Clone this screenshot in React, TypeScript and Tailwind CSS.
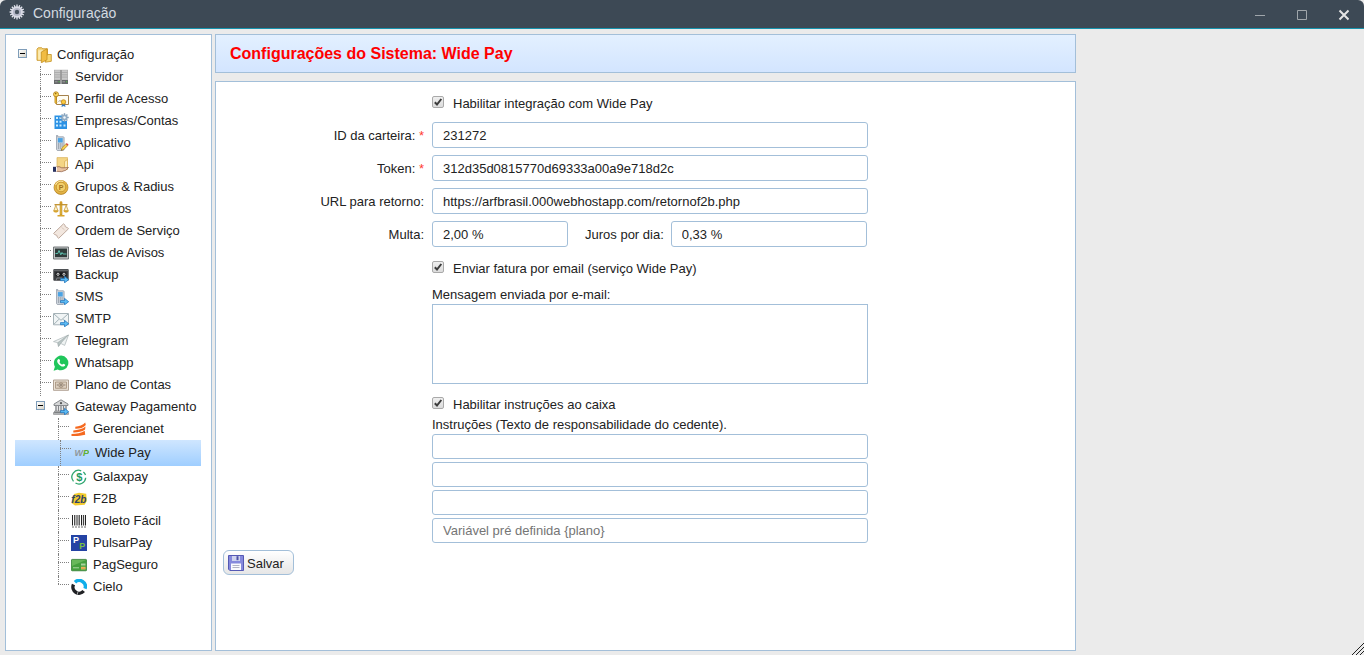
import React, { useState } from 'react';

const Svg = ({ children }: { children: React.ReactNode }) => (
  <svg viewBox="0 0 16 16" className="block size-4 shrink-0" aria-hidden="true">
    {children}
  </svg>
);

const BlueArrow = () => (
  <path d="M7.5 11.6h4V9.3l4.2 3.4-4.2 3.2v-2.2h-4z" fill="#5cbcf4" stroke="#1d6fb8" strokeWidth=".7" />
);

const GearIcon = () => (
  <Svg>
    <g stroke="#e3e5ee" strokeWidth="1.3">
      <path d="M8 .6v14.8M.6 8h14.8M2.8 2.8l10.4 10.4M13.2 2.8L2.8 13.2M5.2 1.2l5.6 13.6M10.8 1.2L5.2 14.8M1.2 5.2l13.6 5.6M1.2 10.8l13.6-5.6" />
    </g>
    <circle cx="8" cy="8" r="5.8" fill="#d9dbe6" />
    <circle cx="8" cy="8" r="4" fill="#b4b7c8" />
    <circle cx="8" cy="8" r="2.2" fill="#44505c" />
  </Svg>
);

const FolderIcon = () => (
  <Svg>
    <path d="M1 2.2L2.2.8h3.6l1 1h4.7v11.5H1z" fill="#f6d67c" stroke="#c9962a" strokeWidth=".9" />
    <path d="M2.2 3.2h5v9.5h-5z" fill="#fcebb4" />
    <path d="M10.5 8.5l1.5-1h3.3v6.8l-6 .9z" fill="#f7d671" stroke="#c48f20" strokeWidth=".8" />
    <path d="M5.3 5L11 1.8v11l-5.7 3z" fill="#f1bc42" stroke="#c48f20" strokeWidth=".8" />
  </Svg>
);

const ServerIcon = () => (
  <Svg>
    <path d="M1 .8h14V11H1z" fill="#a5a5a5" />
    <path d="M1.5 1.3h5.7v9.4H1.5zM8.8 1.3h5.7v9.4H8.8z" fill="#c9c9c9" />
    <path d="M1.5 3.5h13M1.5 5.8h13M1.5 8.1h13" stroke="#a2a2a2" strokeWidth=".7" />
    <path d="M8 1v14" stroke="#8a8a8a" strokeWidth=".8" />
    <path d="M1 11h6.5v4H1zM8.5 11H15v4H8.5z" fill="#66686a" />
    <path d="M2 12.8h2.5M9.5 12.8H12" stroke="#a8abaa" strokeWidth=".8" />
    <path d="M5.5 12.3h1.1v1H5.5zM13 12.3h1.1v1H13z" fill="#57c64b" />
  </Svg>
);

const ProfileIcon = () => (
  <Svg>
    <path d="M3.5 4.5h12v9h-12z" fill="#fffdf3" stroke="#a6824c" />
    <path d="M5.5 10.5l1.5-1 1.2 1 1.3-1" fill="none" stroke="#777" strokeWidth=".7" />
    <path d="M1.9 5.5v6.3l1.1 1 1-1-.7-.9.7-.9-.6-.8V5.5z" fill="#f3c23b" stroke="#af7a13" strokeWidth=".6" />
    <circle cx="3" cy="3.3" r="2.5" fill="#f9d55c" stroke="#b07c16" strokeWidth=".8" />
    <circle cx="2.7" cy="2.6" r=".8" fill="#8f6310" />
    <path d="M9.3 12l-.8 4 2-1 2 1-.8-4z" fill="#3378c4" />
    <circle cx="10.5" cy="11" r="2.3" fill="#f8c93f" stroke="#b97a10" strokeWidth=".7" />
  </Svg>
);

const CompanyIcon = () => (
  <Svg>
    <path d="M1.5 2.5h8V16h-8zM9 8h5v8H9z" fill="#2b91e4" />
    <path d="M3 4h2v2H3zM6.5 4h2v2h-2zM3 7.7h2v2H3zM6.5 7.7h2v2h-2zM3 11.4h2v2H3zM6.5 11.4h2v2h-2zM10.5 11.4h2v2h-2z" fill="#c9ecff" />
    <g stroke="#7f9ab5" strokeWidth="1.4">
      <path d="M11.5.3v8.4M7.3 4.5h8.4M8.6 1.6l5.8 5.8M14.4 1.6L8.6 7.4" />
    </g>
    <circle cx="11.5" cy="4.5" r="3" fill="#93adc5" />
    <circle cx="11.5" cy="4.5" r="1.2" fill="#f4f8fb" />
  </Svg>
);

const Phone = () => (
  <>
    <path d="M3.5.3h1.2v1.5h5.8l.6.8v11.9l-.8 1H4.3l-.8-1z" fill="#cdd4dc" stroke="#8a94a0" strokeWidth=".7" />
    <path d="M4.9 3.1h4.8v4.4H4.9z" fill="#4aa3e4" />
    <path d="M5 9h1M6.8 9h1M8.6 9h1M5 11h1M6.8 11h1M8.6 11h1M5 13h1M6.8 13h1" stroke="#6a7480" strokeWidth=".9" />
  </>
);

const AppIcon = () => (
  <Svg>
    <Phone />
    <path d="M8.2 15.4l.8-2.7 3.8-3.7 1.8 1.7-3.8 3.8z" fill="#f5ce51" stroke="#a17317" strokeWidth=".6" />
    <path d="M12.8 9l1-.9 1.8 1.7-1 .9z" fill="#d6453c" />
    <path d="M8.2 15.4l.3-1 .7.7z" fill="#333" />
  </Svg>
);

const ApiIcon = () => (
  <Svg>
    <path d="M4 .6h10.5v10.5H4z" fill="#f4d584" stroke="#d9b057" strokeWidth=".7" />
    <path d="M11.5 4.5l3-2v10l-3 .5z" fill="#fbebbb" stroke="#d0a13f" strokeWidth=".6" />
    <path d="M3 10.2l3-.6 2.7 1.2H11l4.5-.3-2.7 2.7-4.2 1.5L3 14.3z" fill="#e9c3a2" stroke="#8a5c45" strokeWidth=".7" />
    <path d="M0 9.8h3v5H0z" fill="#27305f" />
    <path d="M3 10h.9v4.6H3z" fill="#fff" />
  </Svg>
);

const CoinIcon = () => (
  <Svg>
    <circle cx="8" cy="8.5" r="7" fill="#cf9a2c" stroke="#a87413" strokeWidth=".6" />
    <circle cx="8" cy="8" r="6.7" fill="#e4b548" />
    <circle cx="8" cy="8" r="4.8" fill="#f2cf6b" stroke="#b98721" strokeWidth=".7" />
    <text x="8" y="10.5" textAnchor="middle" fontSize="7" fontWeight="bold" fill="#a3741c">P</text>
    <path d="M2.6 6a5.8 5.8 0 017.5-3.5" fill="none" stroke="#fff1bc" strokeWidth=".8" />
  </Svg>
);

const ScaleIcon = () => (
  <Svg>
    <path d="M7 2h2v12H7z" fill="#e8b93e" stroke="#a67a1d" strokeWidth=".5" />
    <circle cx="8" cy="1.7" r="1.4" fill="#d39c28" />
    <path d="M1.5 3.7h13" fill="none" stroke="#c0902a" strokeWidth="1.3" />
    <path d="M2.8 4.2L.8 9.7H5zM13.2 4.2L11 9.7h4.2z" fill="#fff3c9" stroke="#be8f2d" strokeWidth=".7" />
    <path d="M.2 9.4h5.4c-.3 2.8-5.1 2.8-5.4 0zM10.4 9.4h5.4c-.3 2.8-5.1 2.8-5.4 0zM4.5 14h7v1.6h-7z" fill="#d8a42d" />
  </Svg>
);

const TicketIcon = () => (
  <Svg>
    <path d="M.6 10.4L10.5.8l1.7 1.6c-.3 1.4.8 2.2 1.8 1.8l1.5 1.6-9.8 9.5-1.6-1.5c.2-1.2-.7-2.2-2-1.9z" fill="#f2e7df" stroke="#b8a294" strokeWidth=".9" />
    <path d="M8.2 3.7l4.3 4.4" stroke="#c2aa9a" strokeWidth=".9" strokeDasharray="1 1" />
  </Svg>
);

const MonitorIcon = () => (
  <Svg>
    <path d="M.5 2h15v12H.5z" fill="#c5c8c9" stroke="#686c6e" strokeWidth=".9" />
    <path d="M2 3.5h12v8.7H2z" fill="#2f3b3a" />
    <path d="M2.5 8.5h2.3L6 5.5l1.8 4.3L9 7.5l1 1.5h3.5" fill="none" stroke="#63d0bd" strokeWidth=".9" />
  </Svg>
);

const TapeIcon = () => (
  <Svg>
    <rect x=".3" y="2" width="15.4" height="11.7" rx="1" fill="#3c3e41" />
    <path d="M1 2.6h14v1.2H1z" fill="#6b6f72" />
    <path d="M2.5 5.3h11v4h-11z" fill="#17181a" />
    <circle cx="5" cy="7.3" r="1.1" fill="none" stroke="#eee" strokeWidth=".9" />
    <circle cx="11" cy="7.3" r="1.1" fill="none" stroke="#eee" strokeWidth=".9" />
    <path d="M3 13.5L4 11h5" fill="none" stroke="#8a8d90" strokeWidth=".8" />
    <BlueArrow />
  </Svg>
);

const SmsIcon = () => (
  <Svg>
    <Phone />
    <BlueArrow />
  </Svg>
);

const MailIcon = () => (
  <Svg>
    <path d="M.5 2.5h15v11.3H.5z" fill="#f0f4f5" stroke="#a6b3b8" />
    <path d="M1 3l7 6.3L15 3M1 13.2l5-5M15 13.2l-5-5" fill="none" stroke="#98a8ae" strokeWidth=".9" />
    <BlueArrow />
  </Svg>
);

const PlaneIcon = () => (
  <Svg>
    <path d="M.5 8.6L15.5 2l-3.8 10.4-4-2-2.2 3-.8-3.7z" fill="#eef2f2" stroke="#aab5b6" strokeWidth=".7" />
    <path d="M4.9 9.5L15.3 2l-7.7 8.4-2.1 3z" fill="#b8c4c4" stroke="#98a4a5" strokeWidth=".5" />
  </Svg>
);

const WhatsappIcon = () => (
  <Svg>
    <path d="M8.2.6a7.3 7.3 0 11-3.5 13.8L.6 15.7l1.3-4A7.4 7.4 0 018.2.6z" fill="#20c65b" />
    <path d="M5.2 4.2c.7-.4 1.2-.2 1.5.6l.4 1c.2.5-.6 1-.6 1.4.6 1.2 1.5 1.9 2.6 2.4.5 0 .8-1 1.3-.9l1.6.8c.5.3.1 1.2-.4 1.6-1.5 1.1-3.7.2-5.2-1.1-1.5-1.4-2.6-3.1-2.1-4.7.2-.5.5-.9.9-1.1z" fill="#fff" />
  </Svg>
);

const CashIcon = () => (
  <Svg>
    <path d="M.5 3h15v10.3H.5z" fill="#ece3d7" stroke="#a9998a" strokeWidth=".9" />
    <path d="M2.5 5h11v6.3h-11z" fill="#ddd0c0" stroke="#a28e78" strokeWidth=".8" />
    <circle cx="8" cy="8.1" r="2.3" fill="#cbbba8" stroke="#897866" strokeWidth=".7" />
    <path d="M7.5 7h1v2h-1zM3.8 7.6h1v1h-1zM11.3 7.6h1v1h-1z" fill="#6e6257" />
  </Svg>
);

const BankIcon = () => (
  <Svg>
    <path d="M1 5L8 .8 15 5v1.5H1z" fill="#d5d6d7" stroke="#707477" strokeWidth=".8" />
    <circle cx="8" cy="4.2" r="1.1" fill="#555" />
    <path d="M3 7v5.5M5.5 7v5.5M8 7v5.5M10.5 7v5.5M13 7v5.5" stroke="#84878a" strokeWidth="1.4" />
    <path d="M1.5 12h13v1.5h-13zM.5 13.5h15v1.9H.5z" fill="#b3b5b7" stroke="#6c6f71" strokeWidth=".5" />
    <BlueArrow />
  </Svg>
);

const GerencianetIcon = () => (
  <Svg>
    <path d="M4.3 5.8C8 5.3 12 4.3 14.2 1.6l.6 2.4C12.5 6.9 8.5 7.9 4.3 7.8zM2.3 9.4c4.5-.4 9.2-1.3 12.2-4l-.4 3.2c-3 2.4-8 3-11.8 2.9zM.5 13c4.7-.3 9.8-.9 13.2-3.3l.5 4C9.5 15 4.5 15.2.5 14.9z" fill="#f5691f" />
  </Svg>
);

const WidePayIcon = () => (
  <Svg>
    <text x="1.5" y="11" fontSize="9" fontWeight="bold" fontStyle="italic" fill="#8f979b">
      W<tspan fill="#5fae34">P</tspan>
    </text>
  </Svg>
);

const GalaxpayIcon = () => (
  <Svg>
    <path d="M10.2 1.8a6.7 6.7 0 00-7.7 10.5M4.5 14a6.7 6.7 0 0010.2-5.2M12.4 3a6.7 6.7 0 012.1 3" fill="none" stroke="#2fa66f" strokeWidth="1.3" />
    <text x="8.2" y="12.2" textAnchor="middle" fontSize="11" fontWeight="bold" fill="#1f9a60">$</text>
  </Svg>
);

const F2bIcon = () => (
  <Svg>
    <path d="M3 3l5-1.2 7.2.9.6 7.3-2.2 3.8L4 14.5.5 12z" fill="#f3ca2c" />
    <text x="7.8" y="12.2" textAnchor="middle" fontSize="10" fontWeight="bold" fontStyle="italic" fill="#2f4468">f2b</text>
  </Svg>
);

const BarcodeIcon = () => (
  <Svg>
    <path d="M1.5 2v10.5M14.5 2v10.5M6 2v10.5M10.5 2v10.5" stroke="#222" />
    <path d="M3.7 2v10.5M8.2 2v10.5M12.5 2v10.5" stroke="#444" strokeWidth="1.3" />
    <path d="M1 14h14" stroke="#666" strokeDasharray="2 1" />
  </Svg>
);

const PulsarIcon = () => (
  <Svg>
    <path d="M0 0h16v16H0z" fill="#2443a4" />
    <text x="2" y="8" fontSize="9" fontWeight="bold" fill="#fff">P</text>
    <text x="8.3" y="14" fontSize="9" fontWeight="bold" fill="#7bc143">P</text>
  </Svg>
);

const CardIcon = () => (
  <Svg>
    <rect x=".4" y="2.4" width="15.2" height="11.4" rx=".8" fill="#45a03e" stroke="#26742a" strokeWidth=".7" />
    <path d="M1 3h14L1 9z" fill="#68b85a" />
    <path d="M2 10.8h6" stroke="#c7e7bd" strokeWidth=".8" />
    <path d="M10 6.5h4.5v2H10z" fill="#a9d39d" />
    <path d="M10 9.8h4.5v2.6H10z" fill="#f2cf64" />
    <path d="M10 10.7h4.5v.8H10z" fill="#cc7a3c" />
  </Svg>
);

const CieloIcon = () => (
  <Svg>
    <path d="M4 3.2A6.1 6.1 0 0114 9.6" fill="none" stroke="#10aeea" strokeWidth="3.4" />
    <path d="M12.7 12A6.1 6.1 0 012.5 5.5" fill="none" stroke="#202225" strokeWidth="3.4" />
    <path d="M7 12.5l-.8 3.2" stroke="#fff" strokeWidth=".6" />
  </Svg>
);

const DiskIcon = () => (
  <Svg>
    <path d="M.5.5h15v15H1.8L.5 14.2z" fill="#8589dc" stroke="#5458b4" />
    <path d="M4 1h8v5H4z" fill="#cfd3ee" />
    <path d="M8.5 1.2h2v4h-2z" fill="#4c51a8" />
    <path d="M3 8.5h10V15H3z" fill="#fafafe" />
    <path d="M4.5 10.5h7M4.5 12.5h7" stroke="#9ea1b5" strokeWidth=".8" />
  </Svg>
);

type Leaf = { label: string; Icon: React.FC };

const systemItems: Leaf[] = [
  { label: 'Servidor', Icon: ServerIcon },
  { label: 'Perfil de Acesso', Icon: ProfileIcon },
  { label: 'Empresas/Contas', Icon: CompanyIcon },
  { label: 'Aplicativo', Icon: AppIcon },
  { label: 'Api', Icon: ApiIcon },
  { label: 'Grupos & Radius', Icon: CoinIcon },
  { label: 'Contratos', Icon: ScaleIcon },
  { label: 'Ordem de Serviço', Icon: TicketIcon },
  { label: 'Telas de Avisos', Icon: MonitorIcon },
  { label: 'Backup', Icon: TapeIcon },
  { label: 'SMS', Icon: SmsIcon },
  { label: 'SMTP', Icon: MailIcon },
  { label: 'Telegram', Icon: PlaneIcon },
  { label: 'Whatsapp', Icon: WhatsappIcon },
  { label: 'Plano de Contas', Icon: CashIcon },
];

const gatewayItems: Leaf[] = [
  { label: 'Gerencianet', Icon: GerencianetIcon },
  { label: 'Wide Pay', Icon: WidePayIcon },
  { label: 'Galaxpay', Icon: GalaxpayIcon },
  { label: 'F2B', Icon: F2bIcon },
  { label: 'Boleto Fácil', Icon: BarcodeIcon },
  { label: 'PulsarPay', Icon: PulsarIcon },
  { label: 'PagSeguro', Icon: CardIcon },
  { label: 'Cielo', Icon: CieloIcon },
];

const Toggle = ({ label, open, onClick }: { label: string; open: boolean; onClick: () => void }) => (
  <button
    type="button"
    aria-label={label}
    aria-expanded={open}
    onClick={onClick}
    className="mb-1 grid size-[9px] shrink-0 place-items-center border border-[#7f9db9] bg-linear-to-br from-white to-[#d8d4c8]"
  >
    <svg viewBox="0 0 5 5" className="block size-[5px]" aria-hidden="true">
      <path d={open ? 'M0 2h5v1H0z' : 'M0 2h5v1H0zM2 0h1v5H2z'} fill="#000" />
    </svg>
  </button>
);

const Connector = ({ last }: { last?: boolean }) => (
  <span className="flex h-full w-[11px] shrink-0 flex-col" aria-hidden="true">
    <span className="h-2 border-l border-dotted border-[#808080]" />
    <span className={last ? 'flex-1 border-t border-dotted border-[#808080]' : 'flex-1 border-t border-l border-dotted border-[#808080]'} />
  </span>
);

const TreeLeaf = ({ item, level, last, selected, onSelect }: {
  item: Leaf;
  level: 1 | 2;
  last?: boolean;
  selected: boolean;
  onSelect: () => void;
}) => {
  const indent = level === 1 ? 'pl-[25px]' : selected ? 'pl-[45px]' : 'pl-[43px]';
  const look = selected ? 'h-[26px] bg-linear-to-b from-[#cfe6ff] to-[#9fceff]' : 'h-[22px]';
  return (
    <li>
      <a
        href="#"
        onClick={(e) => {
          e.preventDefault();
          onSelect();
        }}
        className={`flex items-center ${indent} ${look}`}
      >
        <Connector last={last} />
        <span className="ml-0.5">
          <item.Icon />
        </span>
        <span className="ml-1.5 whitespace-nowrap">{item.label}</span>
      </a>
    </li>
  );
};

const Sidebar = () => {
  const [active, setActive] = useState('Wide Pay');
  const [rootOpen, setRootOpen] = useState(true);
  const [gatewayOpen, setGatewayOpen] = useState(true);
  return (
    <nav aria-label="Configuração" className="w-[207px] shrink-0 border border-[#a3bfd9] bg-white pt-[9px] pr-2.5 pl-[9px]">
      <div className="flex h-[22px] items-center pl-[3px]">
        <Toggle label="Alternar Configuração" open={rootOpen} onClick={() => setRootOpen(!rootOpen)} />
        <span className="ml-[9px]">
          <FolderIcon />
        </span>
        <span className="ml-[5px]">Configuração</span>
      </div>
      {rootOpen && (
        <ul>
          {systemItems.map((item) => (
            <TreeLeaf key={item.label} item={item} level={1} selected={active === item.label} onSelect={() => setActive(item.label)} />
          ))}
          <li>
            <div className="flex h-[22px] items-center pl-[21px]">
              <Toggle label="Alternar Gateway Pagamento" open={gatewayOpen} onClick={() => setGatewayOpen(!gatewayOpen)} />
              <span className="ml-2">
                <BankIcon />
              </span>
              <span className="ml-1.5 whitespace-nowrap">Gateway Pagamento</span>
            </div>
            {gatewayOpen && (
              <ul>
                {gatewayItems.map((item, i) => (
                  <TreeLeaf
                    key={item.label}
                    item={item}
                    level={2}
                    last={i === gatewayItems.length - 1}
                    selected={active === item.label}
                    onSelect={() => setActive(item.label)}
                  />
                ))}
              </ul>
            )}
          </li>
        </ul>
      )}
    </nav>
  );
};

const Check = ({ id, label }: { id: string; label: string }) => (
  <div className="col-start-2 flex h-4 items-center gap-[9px]">
    <span className="mb-0.5 grid size-3 shrink-0">
      <input
        id={id}
        type="checkbox"
        defaultChecked
        className="peer col-start-1 row-start-1 size-3 appearance-none rounded-xs border border-[#a9a9a9] bg-linear-to-b from-[#efefef] to-[#dcdcdc]"
      />
      <svg viewBox="0 0 12 12" className="pointer-events-none invisible col-start-1 row-start-1 size-3 peer-checked:visible" aria-hidden="true">
        <path d="M2.8 6.2L5 8.5 9.3 3" fill="none" stroke="#3c3c3c" strokeWidth="2" />
      </svg>
    </span>
    <label htmlFor={id} className="pt-0.5">{label}</label>
  </div>
);

const FieldLabel = ({ id, text, required }: { id: string; text: string; required?: boolean }) => (
  <label htmlFor={id} className="block pt-0.5 text-right whitespace-nowrap">
    {text}
    {required && <span className="text-[#ff3b30]"> *</span>}
  </label>
);

const fieldClass = 'w-full min-w-0 rounded-[3px] border border-[#a3bfd9] bg-white px-2.5 outline-none placeholder:text-[#757575]';

const instructions = [
  { id: 'inst1' },
  { id: 'inst2' },
  { id: 'inst3' },
  { id: 'inst4', placeholder: 'Variável pré definida {plano}' },
];

const WidePayForm = () => (
  <form
    onSubmit={(e) => e.preventDefault()}
    className="flex-1 border border-[#a3bfd9] bg-white pt-[13px] pb-4"
  >
    <div className="grid grid-cols-[208px_minmax(0,436px)] items-center gap-x-2">
      <Check id="enable" label="Habilitar integração com Wide Pay" />
    </div>
    <div className="mt-[11px] grid grid-cols-[208px_minmax(0,436px)] items-center gap-x-2 gap-y-[7px]">
      <FieldLabel id="wallet" text="ID da carteira:" required />
      <input id="wallet" type="text" defaultValue="231272" className={`h-[26px] ${fieldClass}`} />
      <FieldLabel id="token" text="Token:" required />
      <input id="token" type="text" defaultValue="312d35d0815770d69333a00a9e718d2c" className={`h-[26px] ${fieldClass}`} />
      <FieldLabel id="url" text="URL para retorno:" />
      <input id="url" type="text" defaultValue="https://arfbrasil.000webhostapp.com/retornof2b.php" className={`h-[26px] ${fieldClass}`} />
      <FieldLabel id="fine" text="Multa:" />
      <div className="flex items-center pr-px">
        <div className="w-[136px]">
          <input id="fine" type="text" defaultValue="2,00 %" className={`block h-[26px] ${fieldClass}`} />
        </div>
        <div className="ml-[17px]">
          <FieldLabel id="interest" text="Juros por dia:" />
        </div>
        <div className="ml-[7px] flex-1">
          <input id="interest" type="text" defaultValue="0,33 %" className={`block h-[26px] ${fieldClass}`} />
        </div>
      </div>
    </div>
    <div className="mt-[13px] grid grid-cols-[208px_minmax(0,436px)] gap-x-2">
      <Check id="email" label="Enviar fatura por email (serviço Wide Pay)" />
      <div className="col-start-2 mt-2.5 flex flex-col">
        <label htmlFor="message" className="leading-[18px]">Mensagem enviada por e-mail:</label>
        <textarea id="message" className="block h-20 w-full resize-none border border-[#a3bfd9] bg-white px-2.5 py-1 outline-none" />
      </div>
      <div className="col-start-2 mt-3">
        <Check id="cashier" label="Habilitar instruções ao caixa" />
      </div>
      <fieldset className="col-start-2 mt-1">
        <legend className="leading-[18px]">Instruções (Texto de responsabilidade do cedente).</legend>
        <div className="flex flex-col gap-[3px]">
          {instructions.map((f, i) => (
            <input key={f.id} id={f.id} type="text" aria-label={`Instrução ${i + 1}`} placeholder={f.placeholder} className={`h-[25px] ${fieldClass}`} />
          ))}
        </div>
      </fieldset>
    </div>
    <button
      type="submit"
      className="mt-[7px] ml-[7px] flex h-[25px] items-center gap-[3px] rounded-md border border-[#a3bfd9] bg-linear-to-b from-white to-[#e6e6e6] pr-[9px] pl-1"
    >
      <DiskIcon />
      <span className="pt-0.5">Salvar</span>
    </button>
  </form>
);

const TitleBar = () => (
  <header className="flex h-[29px] shrink-0 items-center justify-between rounded-t-md border-b border-[#1793ad] bg-[#3d4955] pl-[9px]">
    <div className="flex items-start gap-2 pb-1">
      <GearIcon />
      <h1 className="pt-px text-sm leading-4 text-[#d3dae0]">Configuração</h1>
    </div>
    <div className="flex items-center pt-px">
      <button type="button" aria-label="Minimizar" className="grid h-7 w-[42px] place-items-center">
        <svg viewBox="0 0 12 12" className="size-3" aria-hidden="true">
          <path d="M2 6h10v1H2z" fill="#a0a6ab" />
        </svg>
      </button>
      <button type="button" aria-label="Maximizar" className="grid h-7 w-[42px] place-items-center">
        <svg viewBox="0 0 12 12" className="size-3" aria-hidden="true">
          <path d="M2.5 1.5h9v9h-9z" fill="none" stroke="#a0a6ab" />
        </svg>
      </button>
      <button type="button" aria-label="Fechar" className="grid h-7 w-[42px] place-items-center">
        <svg viewBox="0 0 12 12" className="size-3" aria-hidden="true">
          <path d="M2.5 1.5l9 9M11.5 1.5l-9 9" stroke="#e4e4e4" strokeWidth="2" />
        </svg>
      </button>
    </div>
  </header>
);

export default function App() {
  return (
    <div className="relative flex min-h-screen flex-col bg-[#ebebeb] font-['Liberation_Sans',Arial,sans-serif] text-[13px] leading-4 text-[#222222]">
      <TitleBar />
      <div className="flex flex-1 gap-[3px] px-[5px] pt-[5px] pb-1">
        <Sidebar />
        <main className="flex max-w-[861px] min-w-0 flex-1 flex-col gap-2">
          <div className="flex h-[39px] shrink-0 items-center border border-[#a3bfd9] bg-linear-to-b from-[#e3f0ff] to-[#d3e5ff] px-3.5">
            <h2 className="text-base font-bold text-[#ff0000]">Configurações do Sistema: Wide Pay</h2>
          </div>
          <WidePayForm />
        </main>
      </div>
      <svg viewBox="0 0 12 12" className="absolute right-0 bottom-0 size-3" aria-hidden="true">
        <path d="M0 12L12 0M4 12l8-8M8 12l4-4" stroke="#222" />
      </svg>
    </div>
  );
}
